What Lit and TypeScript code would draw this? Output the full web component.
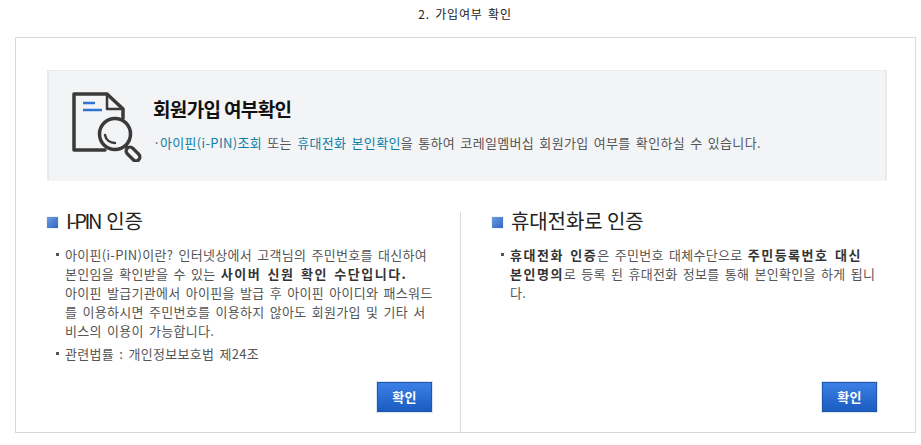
import { LitElement, html, css } from "lit";
import { customElement } from "lit/decorators.js";

@customElement("app-root")
export class AppRoot extends LitElement {
  static styles = css`
    :host { display: block; width: 921px; height: 445px; background: #fff; overflow: hidden;
      font-family: "Noto Sans CJK KR", "Noto Sans", sans-serif; color: #555; font-size: 13px; }
    * { box-sizing: border-box; }
    h1, h2, ul, p { margin: 0; padding: 0; font-weight: normal; }
    .page { display: flex; flex-direction: column; }
    .step { height: 37px; padding: 6px 0 0 9px; text-align: center; font-size: 12px; line-height: 16px; color: #222; letter-spacing: 0.8px; word-spacing: 2px; }
    .box { width: 901px; height: 396px; margin-left: 15px; border: 1px solid #d9d9d9; padding-top: 32px; display: flex; flex-direction: column; }
    .banner { width: 840px; height: 111px; margin-left: 31px; background: #f3f4f6; border: 1px solid #e8eaec; border-bottom: 0; border-left-width: 2px; border-right-width: 2px; display: flex; padding: 21px 0 0 23px; }
    .banner svg { width: 72px; height: 70px; flex: none; }
    .bt { margin-left: 9px; }
    .bt h1 { font-size: 19px; line-height: 26px; font-weight: 700; color: #111; letter-spacing: -0.65px; margin-top: 4px; }
    .bt p { font-size: 13px; line-height: 18px; margin-top: 12px; letter-spacing: 0.33px; word-spacing: 2px; color: #555; white-space: nowrap; display: flex; align-items: baseline; }
    .dot { width: 7px; flex: none; }
    .bt b { font-weight: 400; color: #0f7ea6; }
    .cols { display: flex; flex: 1; margin-top: 31px; }
    .col { width: 444px; display: flex; flex-direction: column; padding-left: 31px; padding-bottom: 20px; }
    .col + .col { width: 455px; border-left: 1px solid #d9d9d9; }
    h2 { display: flex; align-items: center; gap: 8px; font-size: 20px; line-height: 20px; color: #222; letter-spacing: -0.1px; margin: -1px 0 14px; }
    h2 .tight { letter-spacing: -2.3px; margin-right: 6px; }
    h2 i { width: 11px; height: 11px; background: linear-gradient(135deg, #6f9be0, #2f68c4); box-shadow: 0 0 1px #9bb; flex: none; margin-top: 2px; }
    ul { list-style: none; padding-left: 9px; width: 390px; }
    .r ul { width: 386px; }
    li { position: relative; padding-left: 9px; line-height: 19px; letter-spacing: 0.3px; word-spacing: 2px; margin-bottom: 4px; word-break: break-all; }
    li::before { content: ""; position: absolute; left: 0; top: 8px; width: 3px; height: 3px; background: #555; }
    li strong { color: #333; font-weight: 700; letter-spacing: 1.5px; }
    .btn { margin-top: auto; align-self: flex-end; margin-right: 28px; width: 55px; height: 30px; border: 1px solid #1e56a8; outline: 1px solid #dde6f2; outline-offset: 0; background: linear-gradient(#3c7fe6, #1a5cc0); color: #fff; font: 700 13px/26px "Noto Sans CJK KR", sans-serif; padding: 0; letter-spacing: 0.3px; }
    .r .btn { margin-right: 38px; }
  `;

  render() {
    return html`<div class="page">
      <div class="step">2. 가입여부 확인</div>
      <div class="box">
        <div class="banner">
          <svg viewBox="0 0 72 70" fill="none" stroke="#3a3a3a" stroke-width="3.5" stroke-linejoin="round" stroke-linecap="round">
            <path d="M33 58H2V2h33l16 15v9"/>
            <path d="M35 2v15h16" stroke-width="2.5"/>
            <path d="M11 11h12M11 18h19" stroke="#2f74d0" stroke-width="2.6" stroke-linecap="butt"/>
            <circle cx="43" cy="42" r="15.5"/>
            <path d="M33 43c1 5 5 8 10 8" stroke-width="2.5"/>
            <path d="M54 54l4 4" stroke-width="3"/>
            <path d="M58 59l6 6" stroke-width="11"/>
            <path d="M58 59l6 6" stroke="#f3f4f6" stroke-width="4.5"/>
          </svg>
          <div class="bt">
            <h1>회원가입 여부확인</h1>
            <p><span class="dot">·</span><span><b>아이핀(i-PIN)조회</b> 또는 <b>휴대전화 본인확인</b>을 통하여 코레일멤버십 회원가입 여부를 확인하실 수 있습니다.</span></p>
          </div>
        </div>
        <div class="cols">
          <section class="col">
            <h2><i></i><span><span class="tight">I-PIN</span>인증</span></h2>
            <ul>
              <li>아이핀(i-PIN)이란? 인터넷상에서 고객님의 주민번호를 대신하여 본인임을 확인받을 수 있는 <strong>사이버 신원 확인 수단입니다.</strong><br>아이핀 발급기관에서 아이핀을 발급 후 아이핀 아이디와 패스워드를 이용하시면 주민번호를 이용하지 않아도 회원가입 및 기타 서비스의 이용이 가능합니다.</li>
              <li>관련법률 : 개인정보보호법 제24조</li>
            </ul>
            <button class="btn">확인</button>
          </section>
          <section class="col r">
            <h2><i></i>휴대전화로 인증</h2>
            <ul>
              <li><strong>휴대전화 인증</strong>은 주민번호 대체수단으로 <strong>주민등록번호 대신 본인명의</strong>로 등록 된 휴대전화 정보를 통해 본인확인을 하게 됩니다.</li>
            </ul>
            <button class="btn">확인</button>
          </section>
        </div>
      </div>
    </div>`;
  }
}
